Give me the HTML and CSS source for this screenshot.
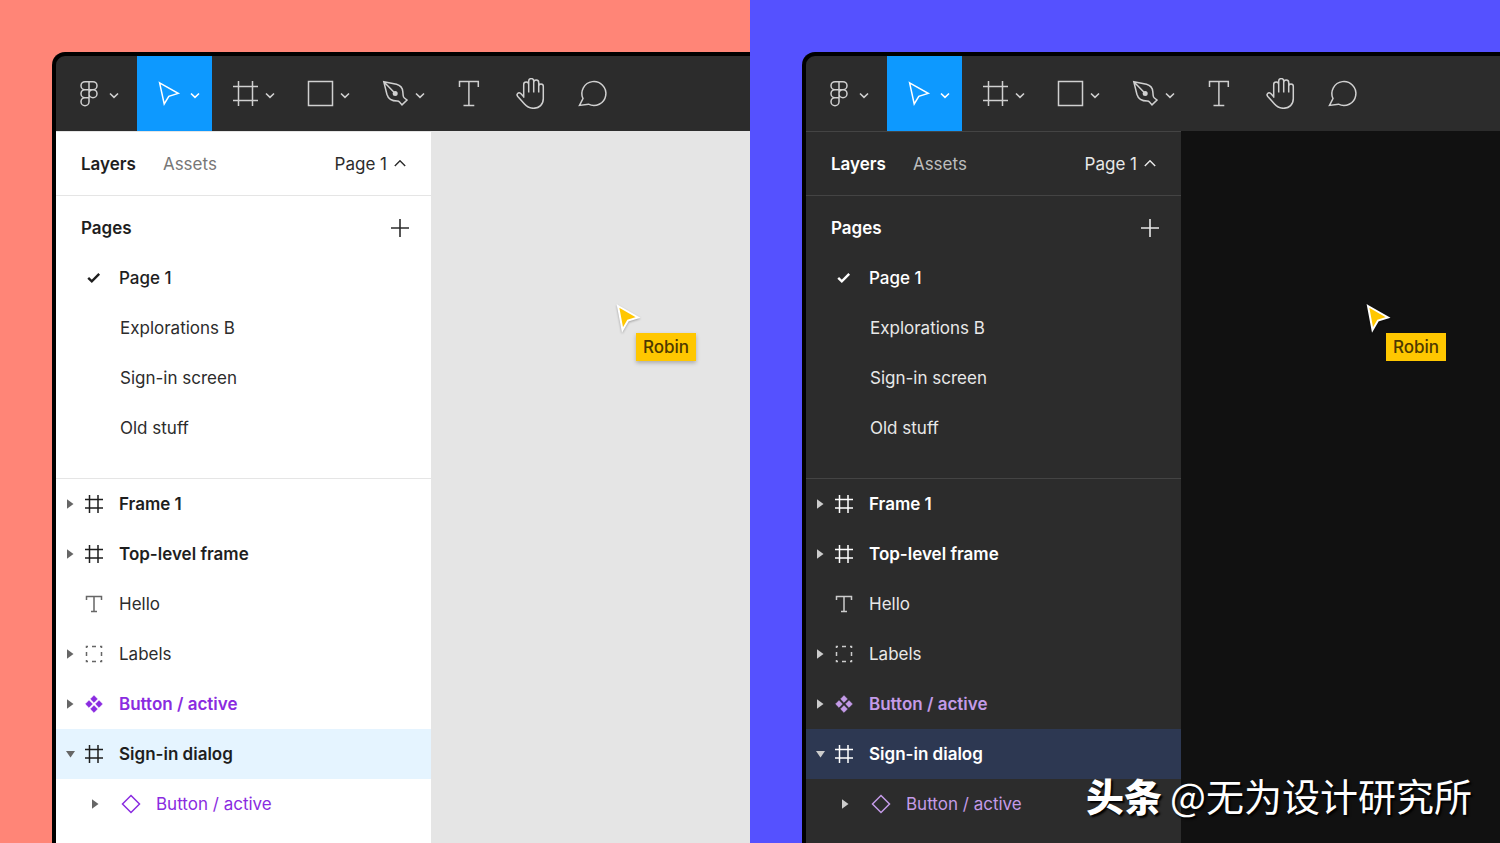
FILE: index.html
```html
<!DOCTYPE html>
<html lang="en">
<head>
<meta charset="utf-8">
<title>Light and dark editor themes</title>
<link rel="stylesheet" href="styles.css">
</head>
<body>
<svg class="sprite" aria-hidden="true">
  <symbol id="logo" viewBox="0 0 31 31"><path d="M15 3.7h-4a4 4 0 0 0 0 8h4zM15 3.7h4a4 4 0 0 1 0 8h-4zM15 11.7h-4a4 4 0 0 0 0 8h4zM15 19.7h-4a4 4 0 1 0 4 4zM19 11.7a4 4 0 1 1 0 8 4 4 0 0 1 0-8z"/></symbol>
  <symbol id="move" viewBox="0 0 31 31"><path d="M4.6 4.8 23.2 15.400 13.800 18.300 9.200 26z"/></symbol>
  <symbol id="frame" viewBox="0 0 31 31"><path d="M8.500 3v25M22.500 3v25M3 8.500h25M3 22.500h25"/></symbol>
  <symbol id="rect" viewBox="0 0 31 31"><path d="M3.500 3.500h24v24h-24z"/></symbol>
  <symbol id="pen" viewBox="0 0 31 31"><path d="M3.800 3.800 16.500 6.300c3.600 1 6 3.700 6.300 7.300l.4 4.200c.1 1 .4 1.600 1.200 2.200l2.600 2-5 4.900-2.500-2.800c-.6-.7-1.300-1-2.300-1-5.200 0-9-2.200-10.300-6.800zM3.800 3.800l11.400 11.700"/><circle class="dot" cx="15.200" cy="15.500" r="2.500"/></symbol>
  <symbol id="text" viewBox="0 0 31 31"><path d="M6.500 9V3.500h18.800V9M15.900 3.500v24M10.500 27.500h10.800"/></symbol>
  <symbol id="hand" viewBox="0 0 31 31"><path d="M8.700 19.800V6.400a2.500 2.500 0 0 1 5 0v8.100V3.100a2.500 2.500 0 0 1 5 0v11.400M18.700 4.500a2.500 2.500 0 0 1 5 0v10M23.700 8.200a2.300 2.300 0 0 1 4.600 0v12.300c0 6-4 9.800-9.700 9.800-3.900 0-6.500-1.300-9.100-4.300l-6.700-7.500c-2-2.400.6-4.800 3-3l2.900 3.300"/></symbol>
  <symbol id="comment" viewBox="0 0 31 31"><path d="M2.500 27.400 6 20.600A12 12 0 1 1 11.400 26.200z"/></symbol>
  <symbol id="down" viewBox="0 0 10 10"><path d="m1 4.500 4 3.800 4-3.800"/></symbol>
  <symbol id="up" viewBox="0 0 12 10"><path d="m.8 7 5.200-5.200L11.200 7"/></symbol>
  <symbol id="plus" viewBox="0 0 18 18"><path d="M9 0v18M0 9h18"/></symbol>
  <symbol id="check" viewBox="0 0 20 20"><path d="m4.200 9.800 3.600 3.500 7.400-7.400"/></symbol>
  <symbol id="right" viewBox="0 0 10 10"><path d="M1 .2 7.500 5 1 9.800z"/></symbol>
  <symbol id="open" viewBox="0 0 10 10"><path d="M0 2h9L4.500 8.500z"/></symbol>
  <symbol id="l-frame" viewBox="0 0 20 20"><path d="M5.500 1v18M14 1v18M1 5.500h18M1 14h18"/></symbol>
  <symbol id="l-text" viewBox="0 0 20 20"><path d="M2.500 6V2.500h15V6M10 2.500v15M7 17.500h6"/></symbol>
  <symbol id="l-group" viewBox="0 0 20 20"><path d="M2.500 4V2.500H4M8 2.500h4M16 2.500h1.500V4M17.500 8v4M17.500 16v1.500H16M12 17.500H8M4 17.500H2.500V16M2.500 12V8"/></symbol>
  <symbol id="l-component" viewBox="0 0 20 20"><path d="m10 1.600 3.400 3.400L10 8.400 6.600 5zM10 11.600l3.400 3.400-3.400 3.400L6.600 15zM5 6.600 8.400 10 5 13.400 1.600 10zM15 6.600l3.400 3.400-3.400 3.400-3.400-3.400z"/></symbol>
  <symbol id="l-instance" viewBox="0 0 20 20"><path d="m10 1.500 8.500 8.500-8.500 8.500L1.500 10z"/></symbol>
  <symbol id="pointer" viewBox="0 0 26 30"><path d="M2 2 22 13.500 12 16.500 6.500 26z"/></symbol>
</svg>

<main class="split">
  <section class="half light" aria-label="Light theme">
    <div class="window">
      <nav class="toolbar" aria-label="Tools">
        <button class="tool menu" aria-label="Main menu"><svg class="glyph"><use href="#logo"/></svg><svg class="chevron"><use href="#down"/></svg></button>
        <button class="tool active" aria-label="Move"><svg class="glyph"><use href="#move"/></svg><svg class="chevron"><use href="#down"/></svg></button>
        <button class="tool" aria-label="Frame"><svg class="glyph"><use href="#frame"/></svg><svg class="chevron"><use href="#down"/></svg></button>
        <button class="tool" aria-label="Rectangle"><svg class="glyph"><use href="#rect"/></svg><svg class="chevron"><use href="#down"/></svg></button>
        <button class="tool" aria-label="Pen"><svg class="glyph"><use href="#pen"/></svg><svg class="chevron"><use href="#down"/></svg></button>
        <button class="tool single" aria-label="Text"><svg class="glyph"><use href="#text"/></svg></button>
        <button class="tool single" aria-label="Hand"><svg class="glyph"><use href="#hand"/></svg></button>
        <button class="tool single" aria-label="Comment"><svg class="glyph"><use href="#comment"/></svg></button>
      </nav>
      <div class="workspace">
        <aside class="sidebar">
          <header class="tabs">
            <button class="tab current">Layers</button>
            <button class="tab">Assets</button>
            <button class="page-picker">Page 1<svg class="caret-up"><use href="#up"/></svg></button>
          </header>
          <section class="pages">
            <div class="pages-head"><h2>Pages</h2><button class="add" aria-label="Add page"><svg><use href="#plus"/></svg></button></div>
            <ul>
              <li class="page chosen"><svg class="check"><use href="#check"/></svg>Page 1</li>
              <li class="page">Explorations B</li>
              <li class="page">Sign-in screen</li>
              <li class="page">Old stuff</li>
            </ul>
          </section>
          <ul class="layers">
            <li class="layer top"><svg class="caret"><use href="#right"/></svg><svg class="kind"><use href="#l-frame"/></svg>Frame 1</li>
            <li class="layer top"><svg class="caret"><use href="#right"/></svg><svg class="kind"><use href="#l-frame"/></svg>Top-level frame</li>
            <li class="layer"><span class="caret"></span><svg class="kind soft"><use href="#l-text"/></svg>Hello</li>
            <li class="layer"><svg class="caret"><use href="#right"/></svg><svg class="kind soft"><use href="#l-group"/></svg>Labels</li>
            <li class="layer top component"><svg class="caret"><use href="#right"/></svg><svg class="kind solid"><use href="#l-component"/></svg>Button / active</li>
            <li class="layer top selected"><svg class="caret"><use href="#open"/></svg><svg class="kind"><use href="#l-frame"/></svg>Sign-in dialog</li>
            <li class="layer nested component"><svg class="caret"><use href="#right"/></svg><svg class="kind"><use href="#l-instance"/></svg>Button / active</li>
          </ul>
        </aside>
        <div class="canvas">
          <div class="collaborator"><svg class="pointer"><use href="#pointer"/></svg><span class="name">Robin</span></div>
        </div>
      </div>
    </div>
  </section>

  <section class="half dark" aria-label="Dark theme">
    <div class="window">
      <nav class="toolbar" aria-label="Tools">
        <button class="tool menu" aria-label="Main menu"><svg class="glyph"><use href="#logo"/></svg><svg class="chevron"><use href="#down"/></svg></button>
        <button class="tool active" aria-label="Move"><svg class="glyph"><use href="#move"/></svg><svg class="chevron"><use href="#down"/></svg></button>
        <button class="tool" aria-label="Frame"><svg class="glyph"><use href="#frame"/></svg><svg class="chevron"><use href="#down"/></svg></button>
        <button class="tool" aria-label="Rectangle"><svg class="glyph"><use href="#rect"/></svg><svg class="chevron"><use href="#down"/></svg></button>
        <button class="tool" aria-label="Pen"><svg class="glyph"><use href="#pen"/></svg><svg class="chevron"><use href="#down"/></svg></button>
        <button class="tool single" aria-label="Text"><svg class="glyph"><use href="#text"/></svg></button>
        <button class="tool single" aria-label="Hand"><svg class="glyph"><use href="#hand"/></svg></button>
        <button class="tool single" aria-label="Comment"><svg class="glyph"><use href="#comment"/></svg></button>
      </nav>
      <div class="workspace">
        <aside class="sidebar">
          <header class="tabs">
            <button class="tab current">Layers</button>
            <button class="tab">Assets</button>
            <button class="page-picker">Page 1<svg class="caret-up"><use href="#up"/></svg></button>
          </header>
          <section class="pages">
            <div class="pages-head"><h2>Pages</h2><button class="add" aria-label="Add page"><svg><use href="#plus"/></svg></button></div>
            <ul>
              <li class="page chosen"><svg class="check"><use href="#check"/></svg>Page 1</li>
              <li class="page">Explorations B</li>
              <li class="page">Sign-in screen</li>
              <li class="page">Old stuff</li>
            </ul>
          </section>
          <ul class="layers">
            <li class="layer top"><svg class="caret"><use href="#right"/></svg><svg class="kind"><use href="#l-frame"/></svg>Frame 1</li>
            <li class="layer top"><svg class="caret"><use href="#right"/></svg><svg class="kind"><use href="#l-frame"/></svg>Top-level frame</li>
            <li class="layer"><span class="caret"></span><svg class="kind soft"><use href="#l-text"/></svg>Hello</li>
            <li class="layer"><svg class="caret"><use href="#right"/></svg><svg class="kind soft"><use href="#l-group"/></svg>Labels</li>
            <li class="layer top component"><svg class="caret"><use href="#right"/></svg><svg class="kind solid"><use href="#l-component"/></svg>Button / active</li>
            <li class="layer top selected"><svg class="caret"><use href="#open"/></svg><svg class="kind"><use href="#l-frame"/></svg>Sign-in dialog</li>
            <li class="layer nested component"><svg class="caret"><use href="#right"/></svg><svg class="kind"><use href="#l-instance"/></svg>Button / active</li>
          </ul>
        </aside>
        <div class="canvas">
          <div class="collaborator"><svg class="pointer"><use href="#pointer"/></svg><span class="name">Robin</span></div>
        </div>
      </div>
    </div>
  </section>
</main>
<p class="credit" lang="zh-CN"><strong>头条</strong><span>@无为设计研究所</span></p>
</body>
</html>
```
FILE: styles.css
```css
* { box-sizing: border-box; }
body { margin: 0; font: 17px/24px Inter, "Liberation Sans", sans-serif; }
h2, ul, p { margin: 0; padding: 0; }
ul { list-style: none; }
button { border: 0; padding: 0; background: none; color: inherit; font: inherit; }
svg { flex: none; fill: none; stroke: currentColor; }
.sprite { position: absolute; width: 0; height: 0; }

.split { display: grid; grid-template-columns: 1fr 1fr; height: 100vh; overflow: hidden; }
.half { display: flex; min-width: 0; padding: 52px 0 0 52px; overflow: hidden; }
.light {
  --ink: #2c2c2c; --strong: #1e1e1e; --muted: #777; --caret: #666; --line: #e5e5e5;
  --panel: #fff; --canvas: #e5e5e5; --selected: #e5f4ff; --component: #8a2be0;
  --soft: #666; --shadow: 0 2px 4px rgba(0, 0, 0, .25);
  background: #ff8577;
}
.dark {
  --ink: #e8e8e8; --strong: #fff; --muted: #bdbdbd; --caret: #ccc; --line: #444;
  --panel: #2c2c2c; --canvas: #111; --selected: #2d3852; --component: #c49be8;
  --soft: #ccc; --shadow: none;
  background: #5551ff;
}
.window {
  display: flex; flex: 1; flex-direction: column; min-width: 0;
  border: solid #000; border-width: 4px 0 0 4px; border-radius: 13px 0 0 0;
  background: #2c2c2c; overflow: hidden;
}
.toolbar { display: flex; flex: none; height: 75px; color: #d0d0d0; }
.tool { display: flex; flex: none; align-items: center; gap: 4px; width: 75px; padding-left: 18px; }
.tool.menu { width: 81px; }
.tool.single { width: 62px; padding-left: 16px; }
.tool.active { background: #0d99ff; color: #fff; }
.glyph { width: 31px; height: 31px; stroke-width: 1.5; overflow: visible; }
.dot { fill: currentColor; stroke: none; }
.chevron { width: 10px; height: 10px; stroke-width: 1.6; }

.workspace { display: flex; flex: 1; min-height: 0; }
.sidebar { flex: none; width: 375px; border-top: 1px solid var(--line); background: var(--panel); color: var(--ink); overflow: hidden; }
.tabs { display: flex; align-items: center; gap: 27px; height: 64px; padding: 0 25px; border-bottom: 1px solid var(--line); }
.tab { color: var(--muted); }
.tab.current { color: var(--strong); font-weight: 600; }
.page-picker { display: flex; align-items: center; gap: 7px; margin-left: auto; }
.caret-up { width: 12px; height: 10px; stroke-width: 1.4; }
.pages { padding: 7px 0 25px; border-bottom: 1px solid var(--line); }
.pages-head { display: flex; align-items: center; justify-content: space-between; height: 50px; padding: 0 22px 0 25px; }
h2 { color: var(--strong); font-size: 17px; font-weight: 600; }
.add { display: flex; }
.add svg { width: 18px; height: 18px; stroke-width: 1.6; }
.page { display: flex; align-items: center; height: 50px; padding-left: 64px; }
.page.chosen { gap: 15px; padding-left: 28px; color: var(--strong); font-weight: 500; }
.check { width: 20px; height: 20px; stroke-width: 2.4; }
.layer { display: flex; align-items: center; height: 50px; padding-left: 10px; }
.layer.top { color: var(--strong); font-weight: 600; }
.layer.component { color: var(--component); }
.layer.selected { background: var(--selected); }
.caret { flex: none; width: 10px; height: 10px; margin-right: 8px; fill: var(--caret); stroke: none; }
.kind { width: 20px; height: 20px; margin-right: 15px; stroke-width: 1.5; }
.kind.soft { color: var(--soft); }
.kind.solid { fill: currentColor; stroke: currentColor; stroke-width: .5; stroke-linejoin: round; }
.nested { padding-left: 35px; }
.nested .caret { margin-right: 20px; }

.canvas { position: relative; flex: 1; min-width: 0; background: var(--canvas); }
.collaborator { position: absolute; top: 173px; left: 185px; }
.pointer { display: block; width: 26px; height: 30px; fill: #ffc700; stroke: #fff; stroke-width: 2; filter: drop-shadow(0 1px 1px rgba(0, 0, 0, .3)); }
.name { position: absolute; top: 29px; left: 20px; padding: 2px 7px; background: #ffc700; color: #4d3900; font-weight: 500; box-shadow: var(--shadow); }
.credit {
  position: absolute; right: 28px; bottom: 20px; display: flex; gap: 8px;
  color: #fff; font: 38px/56px "Noto Sans CJK SC", sans-serif; text-shadow: 2px 2px 2px #000;
}
.credit strong { font-weight: 900; }
```
